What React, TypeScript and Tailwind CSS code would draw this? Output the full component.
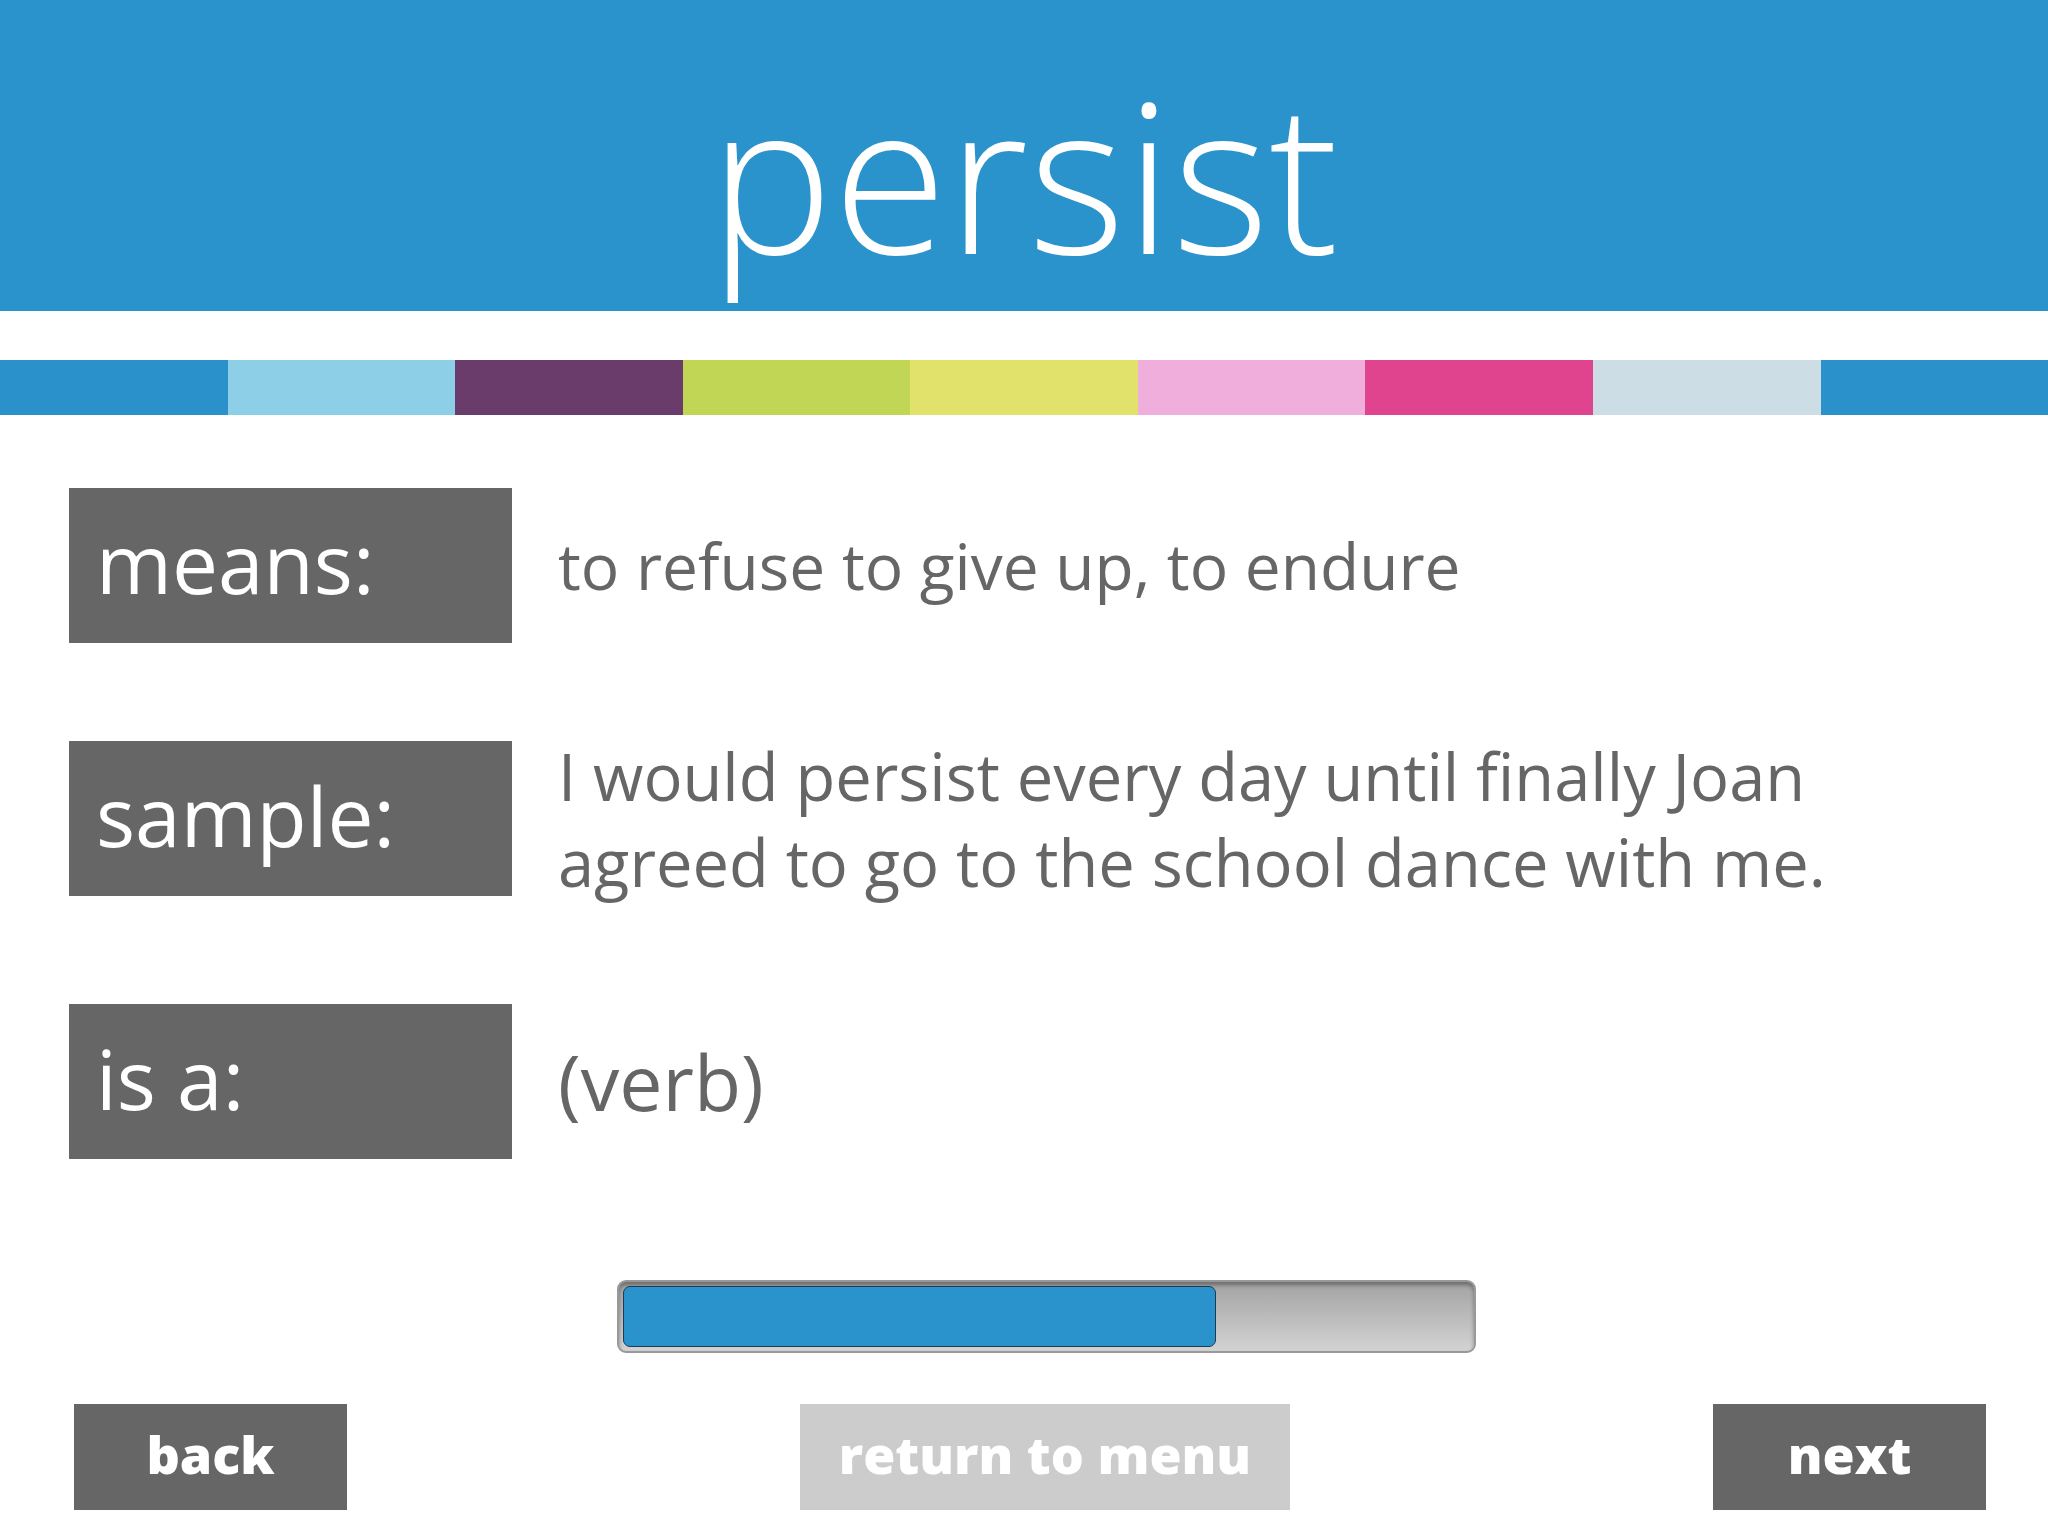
const STRIPES = [
  "bg-[#2a91ca]",
  "bg-[#8dcfe6]",
  "bg-[#6a3c6b]",
  "bg-[#c0d654]",
  "bg-[#e0e26c]",
  "bg-[#efaedb]",
  "bg-[#e0448e]",
  "bg-[#cddde5]",
  "bg-[#2a91ca]",
];

type Row = {
  label: string;
  content: React.ReactNode;
  className: string;
  textClass: string;
};

const ROWS: Row[] = [
  {
    label: "means:",
    content: "to refuse to give up, to endure",
    className: "",
    textClass: "text-[64px] leading-[86px]",
  },
  {
    label: "sample:",
    content: (
      <>
        I would persist every day until finally Joan
        <br />
        agreed to go to the school dance with me.
      </>
    ),
    className: "mt-[98px]",
    textClass: "text-[65px] leading-[86px]",
  },
  {
    label: "is a:",
    content: "(verb)",
    className: "mt-[108px]",
    textClass: "text-[77px] leading-[90px]",
  },
];

function WordRow({ row }: { row: Row }) {
  // fixed height so the two-line sample doesn't push the rows below
  return (
    <div className={`flex h-[155px] items-center ${row.className}`}>
      <div className="flex h-[155px] w-[443px] shrink-0 items-center bg-[#666666] pb-[8px] pl-[27px] text-[82px] leading-none text-white">
        {row.label}
      </div>
      <p className={`ml-[46px] whitespace-nowrap text-[#666666] ${row.textClass}`}>
        {row.content}
      </p>
    </div>
  );
}

export default function App() {
  const progress = 0.7;

  return (
    <div className="h-[1536px] w-[2048px] overflow-hidden bg-white font-['Open_Sans',sans-serif]">
      <header className="flex h-[311px] justify-center bg-[#2b93cb] pt-[70px]">
        <h1 className="text-[208px] font-light leading-none text-white">persist</h1>
      </header>

      <div className="mt-[49px] flex h-[55px]">
        {STRIPES.map((c, i) => (
          <div key={i} className={`flex-1 ${c}`} />
        ))}
      </div>

      <div className="mt-[73px] flex flex-col pl-[69px]">
        {ROWS.map((row) => (
          <WordRow key={row.label} row={row} />
        ))}
      </div>

      <div className="ml-[617px] mt-[121px] h-[73px] w-[859px] rounded-[9px] border-2 border-[#999999] bg-linear-to-b from-[#a3a3a3] to-[#d3d3d3] p-[4px] shadow-[inset_0_3px_4px_rgba(0,0,0,0.35)]">
        <div
          className="h-full rounded-[7px] border border-[#1d3b52] bg-[#2b93cb]"
          style={{ width: `${progress * 100}%` }}
        />
      </div>

      <div className="mt-[51px] flex pl-[74px] text-[52px] font-extrabold leading-none text-white">
        <button className="flex h-[106px] w-[273px] items-center justify-center bg-[#666666] pb-[6px]">
          back
        </button>
        <button className="ml-[453px] flex h-[106px] w-[490px] items-center justify-center bg-[#cccccc] pb-[6px]">
          return to menu
        </button>
        <button className="ml-[423px] flex h-[106px] w-[273px] items-center justify-center bg-[#666666] pb-[6px]">
          next
        </button>
      </div>
    </div>
  );
}
